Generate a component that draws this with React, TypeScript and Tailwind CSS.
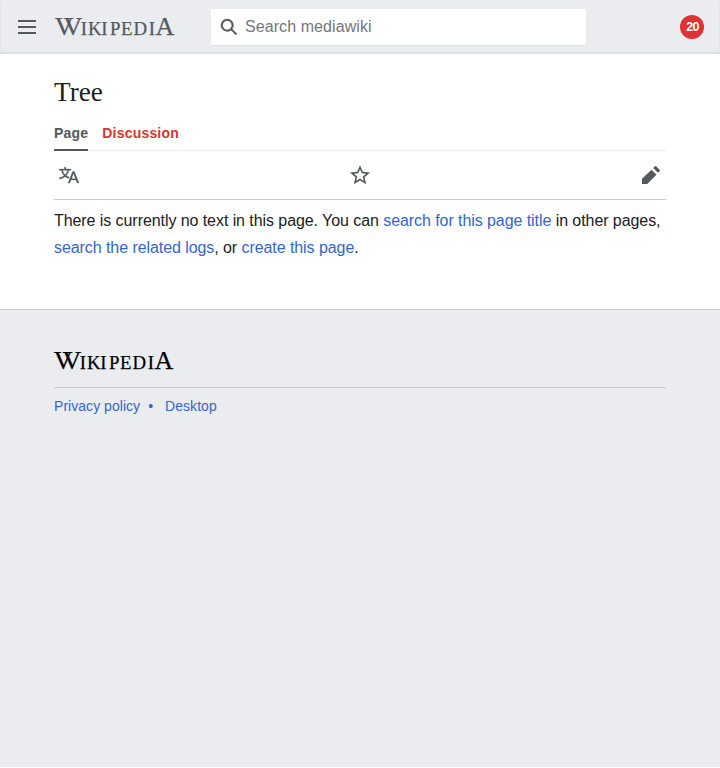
const MENU = 'M1 3v2h18V3zm0 8h18V9H1zm0 6h18v-2H1z'
const SEARCH = 'M12.2 13.6a7 7 0 1 1 1.4-1.4l5.4 5.4-1.4 1.4zM3 8a5 5 0 1 0 10 0A5 5 0 0 0 3 8z'
const LANGUAGE =
  'M20 18h-1.44a.61.61 0 0 1-.4-.12.81.81 0 0 1-.23-.31L17 15h-5l-1 2.54a.77.77 0 0 1-.22.3.59.59 0 0 1-.4.14H9l4.55-11.47h1.89zm-3.53-4.31L14.89 9.5a11.62 11.62 0 0 1-.39-1.24q-.09.37-.19.69l-.19.56-1.58 4.19zm-6.3-1.58a13.43 13.43 0 0 1-2.91-1.41 11.46 11.46 0 0 0 2.81-5.37H12V4H7.31a4 4 0 0 0-.2-.56C6.87 2.79 6.6 2 6.6 2l-1.47.5s.4.89.6 1.5H0v1.33h2.15A11.23 11.23 0 0 0 5 10.7a17.19 17.19 0 0 1-5 2.1q.56.82.87 1.38a23.28 23.28 0 0 0 5.22-2.51 15.64 15.64 0 0 0 3.56 1.77zM3.63 5.33h4.91a8.11 8.11 0 0 1-2.45 4.45 9.11 9.11 0 0 1-2.46-4.45z'
const STAR =
  'M22 9.24l-7.19-.62L12 2 9.19 8.63 2 9.24l5.46 4.73L5.82 21 12 17.27 18.18 21l-1.63-7.03L22 9.24zM12 15.4l-3.76 2.27 1-4.28-3.32-2.88 4.38-.38L12 6.1l1.71 4.04 4.38.38-3.32 2.88 1 4.28L12 15.4z'
const EDIT =
  'm17 7.8 1.8-1.8a.8.8 0 0 0 0-1.1l-3.6-3.6a.8.8 0 0 0-1.1 0L12.2 3.1zM1 13.8V19h5.2l9.3-9.3-5-5z'

function Icon({
  d,
  className = 'size-5',
  viewBox = '0 0 20 20',
}: {
  d: string
  className?: string
  viewBox?: string
}) {
  return (
    <svg viewBox={viewBox} className={`shrink-0 fill-[#54595d] ${className}`}>
      <path d={d} />
    </svg>
  )
}

// The wordmark's W is two overlapping Vs; the inner letters are small capitals.
function Wordmark({ className }: { className: string }) {
  return (
    <svg
      role="img"
      aria-label="Wikipedia"
      viewBox="-1 -8 122 36"
      className={`-mx-px -my-2 h-9 w-[122px] shrink-0 font-['Liberation_Serif',serif] [stroke-width:0.25] ${className}`}
    >
      <text x="-0.2 8.6" y="18" fontSize="26">VV</text>
      <text x="25.8 33.1 46.3 55 66 78.6 93.8" y="18" fontSize="18.8">IKIPEDI</text>
      <text x="100.4" y="18" fontSize="26">A</text>
    </svg>
  )
}

function Link({ children }: { children: string }) {
  return <a className="text-[#3366cc]">{children}</a>
}

export default function App() {
  return (
    <div className="flex h-[767px] flex-col bg-[#eaecf0] font-['Liberation_Sans',Arial,sans-serif] text-[#202122]">
      <header className="flex h-[54px] shrink-0 items-center bg-[#eaecf0] pr-4 pl-[17px] shadow-[inset_0_-1px_3px_rgba(0,0,0,0.08)]">
        <Icon d={MENU} />
        <Wordmark className="ml-[17px] fill-[#54595d] stroke-[#54595d]" />
        <div className="ml-9 flex h-9 w-[375px] items-center rounded-[2px] bg-white pl-[9px] shadow-[0_1px_1px_rgba(0,0,0,0.05)]">
          <Icon d={SEARCH} className="size-[18px] stroke-[#54595d] [stroke-width:0.3]" />
          <span className="ml-[7px] text-base tracking-[0.08px] text-[#72777d]">Search mediawiki</span>
        </div>
        <span className="ml-auto flex size-6 items-center justify-center rounded-full bg-[#dd3333] pl-px text-[12.5px] font-bold tracking-[-0.6px] text-white">
          20
        </span>
      </header>

      <main className="h-[255px] shrink-0 bg-white px-[54px] pt-[21px]">
        <h1 className="font-['Liberation_Serif',serif] text-[27.2px] leading-[35px]">Tree</h1>
        <nav className="mt-[10px] flex h-[31px] gap-[14px] border-b border-[#eaecf0] text-sm leading-[26px] font-bold tracking-[0.2px]">
          <a className="h-[31px] border-b-2 border-[#54595d] text-[#54595d]">Page</a>
          <a className="text-[#dd3333]">Discussion</a>
        </nav>
        <div className="flex h-[49px] items-center justify-between border-b border-[#c8ccd1] px-[5px]">
          <Icon d={LANGUAGE} className="size-5 stroke-[#54595d] [stroke-width:0.25]" />
          <Icon d={STAR} viewBox="2 1.8 20 20" />
          <Icon d={EDIT} />
        </div>
        <p className="mt-[7px] text-base leading-[27px] tracking-[-0.07px]">
          There is currently no text in this page. You can <Link>search for this page title</Link> in other pages,{' '}
          <Link>search the related logs</Link>, or <Link>create this page</Link>.
        </p>
      </main>

      <footer className="border-t border-[#c8ccd1] px-[54px] pt-[41px]">
        <div className="flex h-[37px] items-start border-b border-[#c8ccd1]">
          <Wordmark className="fill-black stroke-black" />
        </div>
        <div className="flex pt-[7px] text-sm leading-[22px] tracking-[0.04px]">
          <Link>Privacy policy</Link>
          <span className="mr-3 ml-2 text-[#3366cc]">•</span>
          <Link>Desktop</Link>
        </div>
      </footer>
    </div>
  )
}
